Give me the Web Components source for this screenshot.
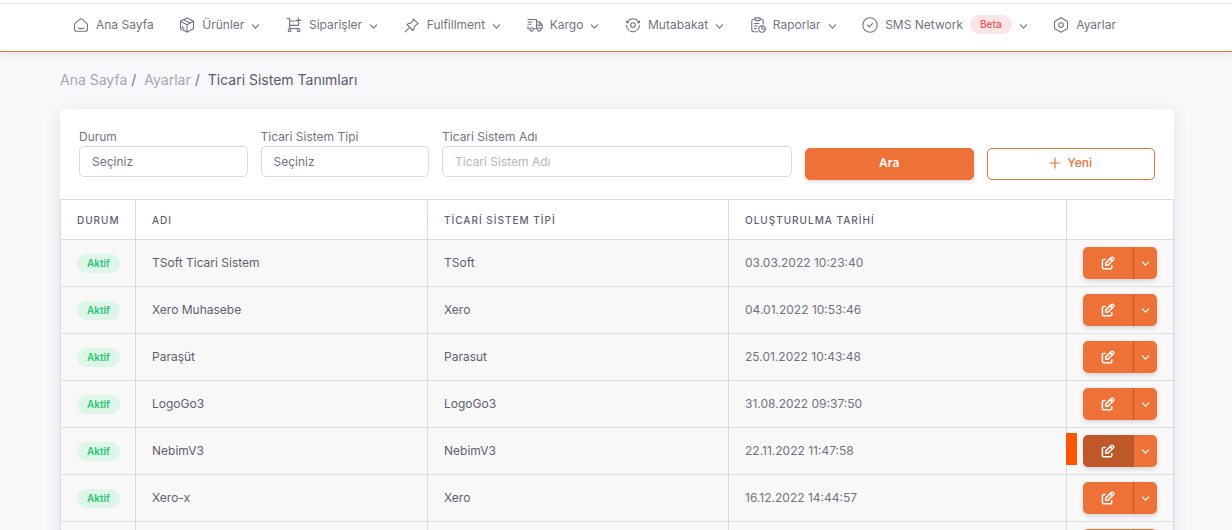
<!DOCTYPE html>
<html lang="tr">
<head>
<meta charset="utf-8">
<title>Ticari Sistem Tanımları</title>
<style>
  :root {
    --accent: #ee7138;
    --accent-dark: #be5828;
    --text: #757182;
    --heading: #625e70;
    --muted: #a8a6b1;
    --line: #dbdade;
  }
  body {
    margin: 0;
    background: #f8f7fa;
    color: var(--text);
    font: 12px/18px Inter, "Liberation Sans", sans-serif;
  }
</style>
</head>
<body>
<app-shell>
  <nav-bar slot="nav">
    <nav-item icon="home">Ana Sayfa</nav-item>
    <nav-item icon="box" menu>Ürünler</nav-item>
    <nav-item icon="cart" menu>Siparişler</nav-item>
    <nav-item icon="pin" menu>Fulfillment</nav-item>
    <nav-item icon="truck" menu>Kargo</nav-item>
    <nav-item icon="sync" menu>Mutabakat</nav-item>
    <nav-item icon="report" menu>Raporlar</nav-item>
    <nav-item icon="check" menu>SMS Network<pill-badge slot="badge" tone="danger">Beta</pill-badge></nav-item>
    <nav-item icon="hex">Ayarlar</nav-item>
  </nav-bar>
  <crumb-trail></crumb-trail>
  <content-card>
    <search-form></search-form>
    <systems-table></systems-table>
  </content-card>
</app-shell>

<script>
const ICONS = {
  home: '<path d="M2.2 6.4 7 2.2q1-.8 2 0l4.8 4.2q.7.7.7 1.700V12q0 2.300-2.300 2.300H3.800Q1.500 14.300 1.500 12V8.100q0-1 .7-1.700Z"/><path d="M5 11q3 1.300 6 0"/>',
  box: '<path d="M8 1 14.500 4.300v7.400L8 15 1.500 11.700V4.300Z"/><path d="M1.500 4.300 8 7.700l6.500-3.400M8 7.700V15M4.700 2.700l6.500 3.300M3.500 9.500v1.300l1.500.8"/>',
  cart: '<path d="M1.300 1.200h2.300v10.300M3.600 4h4.600M3.600 8.400h8.600l.8-2M3.600 11.500H13M12.300.8v5.200M9.700 3.400H15"/><circle cx="3.600" cy="13.200" r="1.400"/><circle cx="12.600" cy="13.200" r="1.400"/>',
  pin: '<path d="m9.300 1.800 5 5-1.700.5-2.300 2.500q.4 2.300-1.400 3.700L3 7.600q1.600-1.800 3.800-1.400L9 3.800Z"/><path d="M5.600 10.400 1.200 14.800"/>',
  truck: '<path d="M1 2.500h8.500v9.300H6.800M9.500 4.800h3l2.700 3.400v3.600h-1.400M9.500 11.800h1M2.400 11.800H1V9.500M1 5h4.300M1 7.300h3M9.500 8.200h5.700M12.200 4.800v3.400"/><circle cx="4.600" cy="12.400" r="1.700"/><circle cx="12.200" cy="12.400" r="1.700"/>',
  sync: '<path d="M2.400 4.800a6.600 6.600 0 0 1 11.200 0M1.400 8.500a6.600 6.600 0 0 0 2.600 4.700M14.600 8.500a6.600 6.600 0 0 1-2.600 4.700M5.500 14.200q2.500 1 5 0M1.500 4v1.600h2M14.500 4v1.600h-2"/><circle cx="8" cy="8" r="2.300"/>',
  report: '<path d="M10.500 2.200h1q1.700 0 1.700 1.700v3M4.500 2.200h-1q-1.700 0-1.700 1.700V13q0 1.700 1.700 1.700h4"/><path d="M5 .9h5.200v1.400q0 1.300-1.300 1.300H6.300Q5 3.600 5 2.300ZM4.400 6.500h4.500M4.400 9h3M4.400 11.500h2"/><circle cx="12" cy="12" r="3.200"/><path d="M12 8.800V12h3.200"/>',
  check: '<circle cx="8" cy="8" r="7.200"/><path d="m5.400 8.200 1.900 1.700 3.400-3.600"/>',
  hex: '<path d="m8 .7 5.700 3.200q.8.500.8 1.400v5.400q0 .9-.8 1.400L8 15.300l-5.700-3.200q-.8-.5-.8-1.400V5.300q0-.9.8-1.400Z"/><circle cx="8" cy="8" r="2.300"/>'
};
const svg = (body, size = 16, box = 16, width = 1.1) =>
  `<svg width="${size}" height="${size}" viewBox="0 0 ${box} ${box}" fill="none" stroke="currentColor" stroke-width="${width}" stroke-linecap="round" stroke-linejoin="round" aria-hidden="true">${body}</svg>`;
const CHEVRON_PATH = '<path d="m1.500 3.200 3.500 3.600 3.500-3.600"/>';

class BaseElement extends HTMLElement {
  connectedCallback() {
    if (this.shadowRoot) return;
    this.attachShadow({ mode: "open" }).innerHTML =
      `<style>*{box-sizing:border-box}${this.css()}</style>${this.html()}`;
  }
}

customElements.define("app-shell", class extends BaseElement {
  css() { return `
    :host { display: block; height: 100vh; overflow: hidden; }
    main { margin: 0 58px 0 60px; }`; }
  html() { return `<slot name="nav"></slot><main><slot></slot></main>`; }
});

customElements.define("nav-bar", class extends BaseElement {
  css() { return `
    :host { display: block; padding-top: 3px; background: #fff; border-bottom: 1px solid var(--accent); box-shadow: 0 2px 6px rgba(75,70,92,.12); }
    nav { display: flex; justify-content: space-between; align-items: center; height: 48px; padding: 0 116px 6px 73px; border-top: 1px solid #dfdfe1; }`; }
  html() { return `<nav aria-label="Ana menü"><slot></slot></nav>`; }
});

customElements.define("nav-item", class extends BaseElement {
  css() { return `
    :host { display: block; }
    a { display: flex; align-items: center; gap: 7px; color: inherit; text-decoration: none; white-space: nowrap; }
    svg { display: block; flex: none; }
    .arrow { margin-top: 3px; }`; }
  html() { return `<a href="#">${svg(ICONS[this.getAttribute("icon")])}<span><slot></slot></span><slot name="badge"></slot>${
    this.hasAttribute("menu") ? `<span class="arrow">${svg(CHEVRON_PATH, 9, 10, 1.2)}</span>` : ""}</a>`; }
});

customElements.define("pill-badge", class extends BaseElement {
  css() { return `
    :host { display: inline-block; padding: 0 10px; border-radius: 10px; font-size: 10px; line-height: 19px; font-weight: 600; color: #28c76f; background: #ddf6e8; vertical-align: middle; }
    :host([tone="danger"]) { color: #ea5455; background: #fce5e6; font-weight: 500; }`; }
  html() { return `<slot></slot>`; }
});

customElements.define("crumb-trail", class extends BaseElement {
  css() { return `
    :host { display: block; padding: 17px 0 19px; font-size: 14px; line-height: 21px; }
    ol { display: flex; margin: 0; padding: 0; list-style: none; }
    li + li::before { content: "/"; padding: 0 8px 0 4px; color: var(--text); }
    a { color: var(--muted); text-decoration: none; }
    [aria-current] { color: #5d596c; }`; }
  html() { return `<nav aria-label="Sayfa yolu"><ol><li><a href="#">Ana Sayfa</a></li><li><a href="#">Ayarlar</a></li><li aria-current="page">Ticari Sistem Tanımları</li></ol></nav>`; }
});

customElements.define("content-card", class extends BaseElement {
  css() { return `:host { display: block; background: #fff; border-radius: 5px; box-shadow: 0 3px 16px rgba(75,70,92,.12); }`; }
  html() { return `<slot></slot>`; }
});

customElements.define("search-form", class extends BaseElement {
  css() { return `
    :host { display: block; padding: 19px; }
    form { display: grid; grid-template-columns: repeat(6, minmax(0, 1fr)); gap: 13px; }
    .wide { grid-column: span 2; }
    label { display: block; line-height: 18px; }
    select, input { display: block; width: 100%; height: 31px; padding: 0 12px; border: 1px solid var(--line); border-radius: 5px; background: #fff; color: inherit; font: inherit; appearance: none; }
    input::placeholder { color: #b7b5be; opacity: 1; }
    button { display: flex; align-items: center; justify-content: center; gap: 6px; height: 32px; margin-top: 20px; padding: 0 0 2px; border: 1px solid var(--accent); border-radius: 5px; background: #fff; color: var(--accent); font: inherit; font-weight: 500; }
    .primary { background: var(--accent); color: #fff; font-weight: 600; box-shadow: 0 2px 4px rgba(75,70,92,.2); }`; }
  html() { return `<form>
    <div><label for="status">Durum</label><select id="status"><option>Seçiniz</option></select></div>
    <div><label for="type">Ticari Sistem Tipi</label><select id="type"><option>Seçiniz</option></select></div>
    <div class="wide"><label for="name">Ticari Sistem Adı</label><input id="name" type="text" placeholder="Ticari Sistem Adı"></div>
    <button class="primary" type="button">Ara</button>
    <button type="button">${svg('<path d="M6 1v10M1 6h10"/>', 12, 12, 1.2)}Yeni</button>
  </form>`; }
});

customElements.define("row-actions", class extends BaseElement {
  css() { return `
    :host { display: flex; height: 32px; border-radius: 5px; overflow: hidden; box-shadow: 0 2px 4px rgba(75,70,92,.2); }
    button { display: grid; place-items: center; padding: 0; border: 0; background: var(--accent); color: #fff; }
    .edit { flex: 1; border-right: 1px solid var(--accent-dark); }
    .more { width: 23px; }
    :host([active]) .edit { background: var(--accent-dark); }`; }
  html() { return `<button class="edit" type="button" aria-label="Düzenle">${svg('<path d="M4.200 3.400H2.500Q1.400 3.400 1.400 4.500v7q0 1.200 1.200 1.200h7q1.200 0 1.200-1.200V9.800"/><path d="M4.700 9.300V7.100l5.500-5.500q1.100-.9 2.100.1t.1 2.100L6.900 9.300ZM9.200 2.700l2.200 2.200"/>', 14, 14, 1.5)}</button><button class="more" type="button" aria-label="Diğer">${svg(CHEVRON_PATH, 9, 10, 1.4)}</button>`; }
});

const ROWS = [
  ["TSoft Ticari Sistem", "TSoft", "03.03.2022 10:23:40"],
  ["Xero Muhasebe", "Xero", "04.01.2022 10:53:46"],
  ["Paraşüt", "Parasut", "25.01.2022 10:43:48"],
  ["LogoGo3", "LogoGo3", "31.08.2022 09:37:50"],
  ["NebimV3", "NebimV3", "22.11.2022 11:47:58", true],
  ["Xero-x", "Xero", "16.12.2022 14:44:57"],
  ["", "", ""]
];

customElements.define("systems-table", class extends BaseElement {
  css() { return `
    :host { display: block; }
    table { width: 100%; table-layout: fixed; border-collapse: collapse; }
    th, td { border: 1px solid var(--line); padding: 0 16px; text-align: left; }
    th { height: 40px; font-size: 10px; font-weight: 500; letter-spacing: 1px; color: var(--heading); white-space: nowrap; }
    td { height: 47px; background: #f8f8f8; }
    td.name { color: var(--heading); }
    .c1 { width: 75px; } .c2 { width: 292px; } .c3 { width: 301px; } .c5 { width: 107px; }
    td.actions { position: relative; }
    .mark { position: absolute; left: -1px; top: 5px; width: 11px; height: 32px; background: #fe5600; }`; }
  html() { return `<table>
    <colgroup><col class="c1"><col class="c2"><col class="c3"><col><col class="c5"></colgroup>
    <thead><tr><th>DURUM</th><th>ADI</th><th>TİCARİ SİSTEM TİPİ</th><th>OLUŞTURULMA TARİHİ</th><th></th></tr></thead>
    <tbody>${ROWS.map(([name, type, date, active]) => `<tr>
      <td>${name ? "<pill-badge>Aktif</pill-badge>" : ""}</td><td class="name">${name}</td><td class="name">${type}</td><td>${date}</td>
      <td class="actions">${active ? '<span class="mark"></span>' : ""}<row-actions${active ? " active" : ""}></row-actions></td></tr>`).join("")}</tbody>
  </table>`; }
});
</script>
</body>
</html>
